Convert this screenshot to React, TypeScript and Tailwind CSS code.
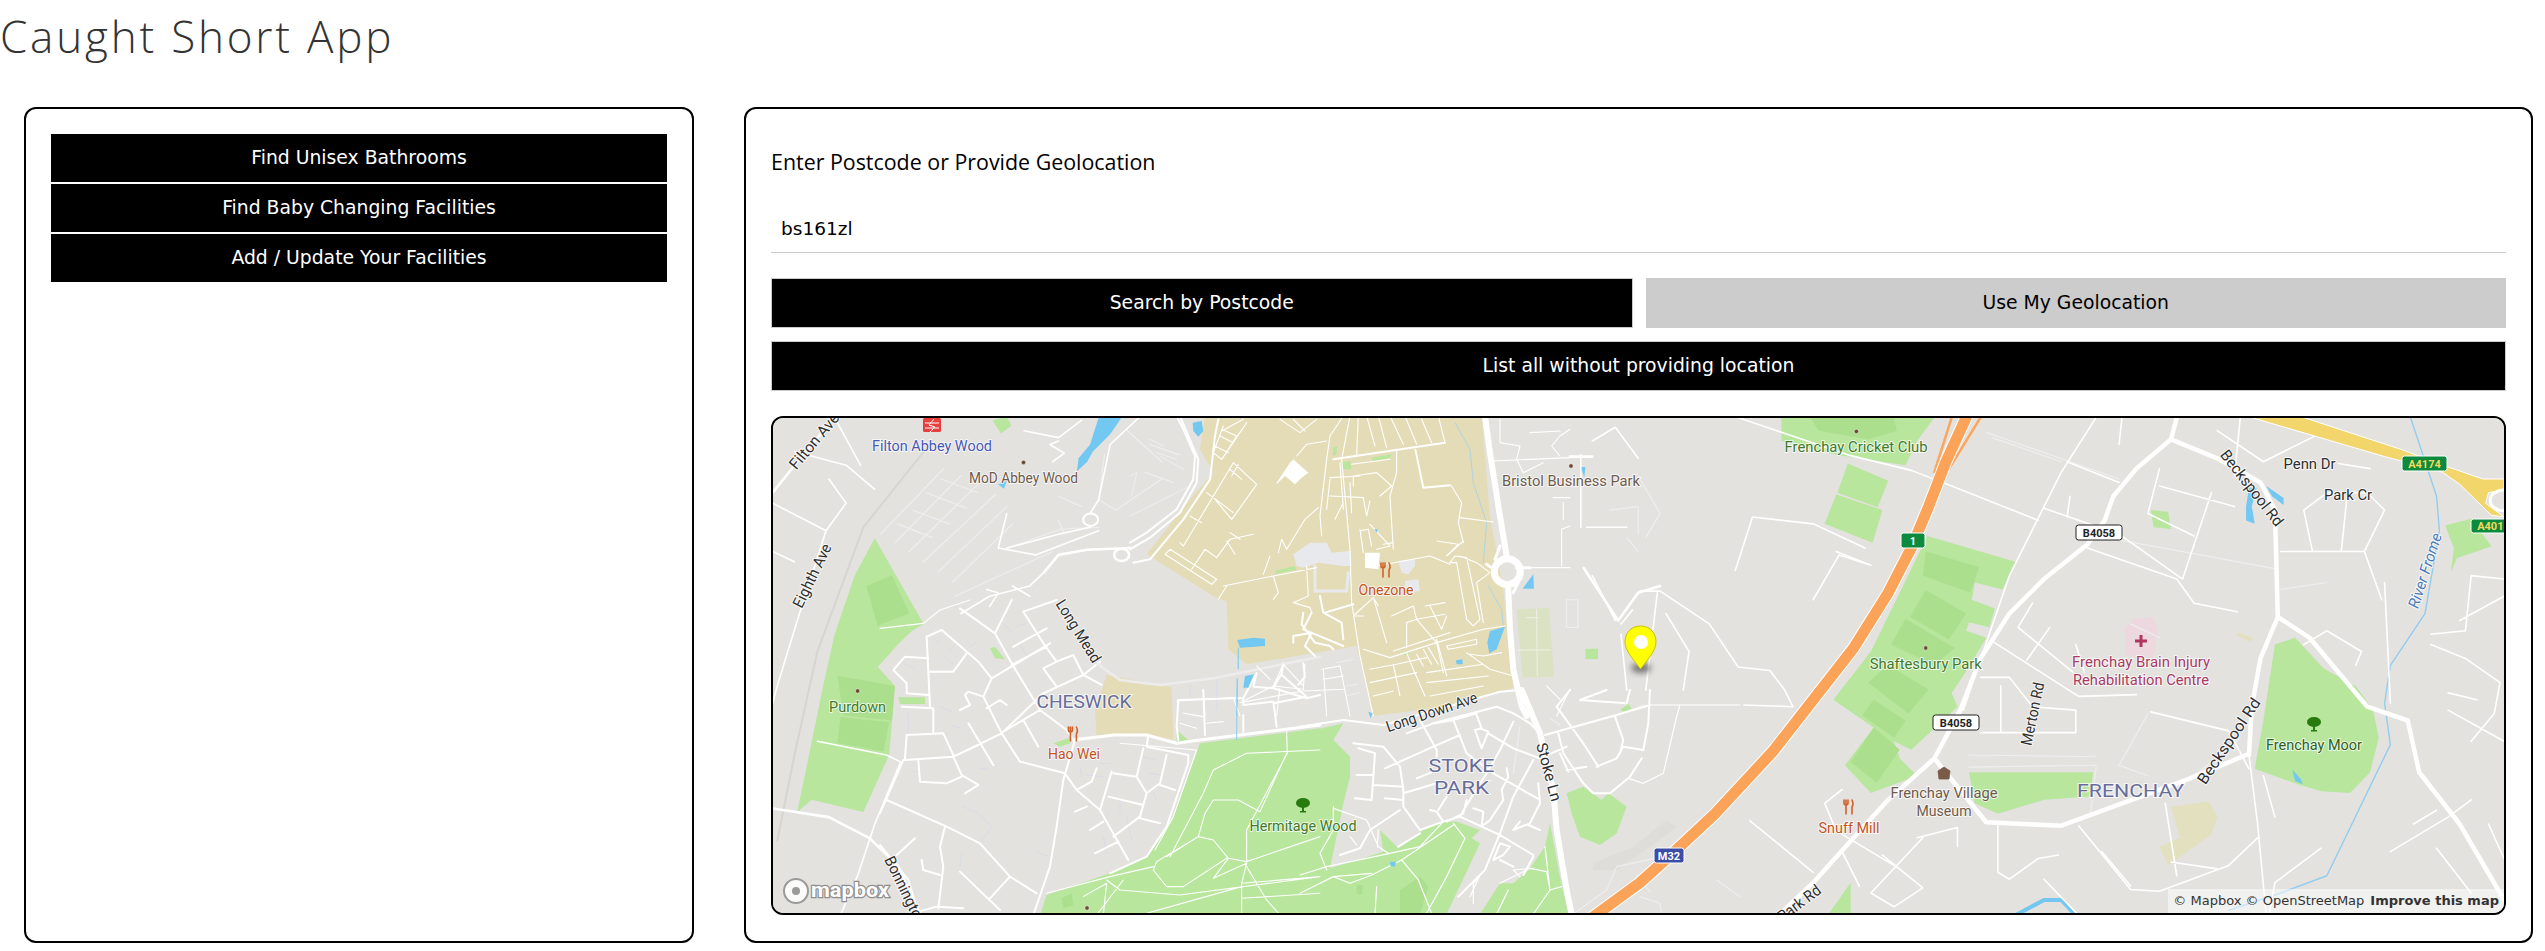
import React from 'react';

// Map paths are traced in crops of the reference, so each group has its own offset and scale
const WEST = 'translate(760 410) scale(0.574 0.345)';
const EAST = 'translate(1640 410) scale(0.5772 0.345)';
const CAMPUS = 'translate(1130 416) scale(0.3333)';
const CHESWICK = 'translate(880 600) scale(0.3333)';
const STOKE = 'translate(1300 690) scale(0.3333)';

const PARK = '#b7e69c';
const PARK_DARK = '#acdf8d';
const SAND = '#e4dcb7';
const WATER = '#72c8f1';
const PLAZA = '#e8e9ec';

const westParks = [
  'M200,372 L285,620 L265,640 L240,680 L205,745 L235,800 L230,900 L225,1000 L180,1165 L90,1130 L65,1165 L110,800 L130,650 L165,480 Z',
  'M405,30 L430,20 L438,45 L420,68 Z',
  'M1438,692 L1460,692 L1460,722 L1438,722 Z',
];
const westDark = [
  'M185,510 L230,480 L260,590 L205,625 Z',
  'M135,770 L235,800 L230,900 L145,885 Z',
  'M140,890 L225,905 L215,990 L135,965 Z',
];
const westWater = [
  'M590,22 L630,22 L610,70 L580,120 L570,150 L552,178 L555,140 L575,100 Z',
  'M1430,165 L1438,165 L1436,195 Z',
  'M415,215 L430,205 L425,228 Z',
];
const westThick =
  'M22,240 L70,140 L130,22 M495,470 L520,420 L570,405 L645,400 ' +
  'M22,1155 L120,1180 L190,1240 L240,1320 L280,1465 M1411,135 L1450,135 M1435,458 L1495,610 L1530,530 L1568,510';
const westThin =
  'M22,270 L115,350 M22,410 L60,440 M60,120 L150,160 L200,230 M130,22 L175,160 M120,200 L150,270 L115,350 L65,610 L30,800 L22,850 ' +
  'M245,1020 L200,1200 L170,1350 L140,1465 M100,960 L220,1000 L245,1020 ' +
  'M495,470 L470,510 L400,540 L350,590 M440,510 L470,540 M395,520 L415,530 L400,570 ' +
  'M660,22 L610,100 L590,260 L575,300 M575,340 L520,360 L430,400 M430,300 L415,400 L480,420 L590,350 ' +
  'M520,90 L505,100 L530,125 L510,150 M460,60 L520,80 L560,30 ' +
  'M1450,90 L1490,50 L1530,140 M1430,130 L1430,340 M1440,340 L1510,340 M1520,580 L1500,620 M1450,480 L1490,610 M1500,650 L1510,812';
const westFaint =
  'M210,360 L320,170 M235,385 L350,190 M260,410 L380,215 M285,440 L410,245 M310,470 L430,280 M335,500 L440,330 ' +
  'M240,330 L300,370 M265,290 L330,330 M290,240 L360,285 M315,200 L380,240 M340,540 L510,410 M430,400 L525,345 L590,340 ' +
  'M640,60 L700,150 M680,100 L730,130 M670,180 L720,210 M600,130 L590,260 L620,290 L700,200 M520,250 L560,280 M520,320 L530,360 ' +
  'M1480,290 L1530,280 L1530,360 M1510,370 L1530,410 M1405,550 L1425,550 L1425,630 L1405,630 Z';
const westRail = 'M300,90 L180,340 L100,700 L60,1000 L30,1250';

const campusFill = 'M225,0 L1055,0 L1080,300 L1120,520 L1140,700 L1150,815 L960,870 L730,900 L680,690 L350,745 L295,700 L290,555 L265,550 L50,415 L180,250 L250,170 L210,100 Z';
const campusGreen = [
  'M435,465 L495,450 L498,462 L435,473 Z',
  'M630,140 L660,135 L665,160 L640,160 Z',
  'M725,125 L785,115 L780,125 L730,135 Z',
  'M610,95 L622,90 L618,118 L608,118 Z',
  'M520,425 L545,415 L550,425 L525,432 Z',
  'M820,708 L838,706 L835,716 L822,716 Z',
];
const campusWater = [
  'M188,20 L215,15 L220,45 L205,62 L190,45 Z',
  'M322,672 L370,665 L405,668 L405,690 L330,695 Z',
  'M345,780 L372,775 L355,815 L340,815 Z',
  'M1080,645 L1125,632 L1100,700 L1078,712 L1072,680 Z',
  'M1178,518 L1210,475 L1212,518 Z',
  'M978,733 L998,730 L998,745 L980,745 Z',
  'M733,340 L743,340 L740,350 Z',
];
const campusThick = 'M1065,0 L1080,110 L1110,300 L1130,420 M1135,520 L1140,640 L1150,760 L1175,870 L1190,900';
const campusMedium =
  'M0,400 L60,365 L150,290 L200,200 L205,130 L175,60 L150,0 M10,440 L60,430 L160,310 L240,190 L255,60 L265,10 M0,380 L50,350 L140,280 L190,190 L195,120 L160,40 L140,0 ' +
  'M610,130 L945,80 M855,95 L880,215 L960,208 M570,540 L580,590 L635,620 L640,670 M585,590 L670,565 M520,590 L515,625 L555,680 L600,690 L610,700 ' +
  'M545,590 L520,640 L640,690 M490,680 L490,660 L545,650 L525,690 L555,720';
const campusThin =
  'M640,0 L600,60 L590,130 L570,300 L575,360 M660,0 L635,130 L660,400 L665,560 L690,720 L730,900 ' +
  'M680,120 L685,0 M735,90 L710,0 M770,95 L745,0 M820,85 L780,0 M860,85 L825,0 M905,80 L875,10 M945,80 L925,0 ' +
  'M800,100 L800,170 L780,240 L790,400 M665,145 L780,130 M670,210 L670,180 L740,170 L785,210 L750,240 ' +
  'M600,185 L690,180 M600,240 L700,245 L710,300 L720,255 M615,310 L640,260 M600,190 L590,280 M630,140 L640,280 M660,200 L665,290 ' +
  'M965,210 L995,260 L985,320 L1000,380 M990,305 L1090,318 M920,375 L985,385 L950,420 L1000,375 ' +
  'M960,440 L975,420 L1010,425 L1050,610 L1030,630 L1010,610 L980,440 Z M990,420 L1040,440 L1080,470 L1040,500 L1060,620 ' +
  'M740,450 L900,420 L960,445 M280,510 L430,480 L560,455 M265,550 L290,510 M430,480 L445,530 L430,550 M400,475 L420,420 M445,410 L455,370 L470,400 L525,310 L565,275 M500,120 L530,85 L590,75 ' +
  'M530,450 L535,540 L490,560 L540,575 L545,590 M670,600 L730,545 L770,680 M672,600 L700,600 M730,545 L745,570 ' +
  'M785,600 L850,570 L860,610 L830,620 L830,695 M860,610 L945,595 M885,570 L945,560 M900,570 L935,640 L950,600 M860,610 L920,680 L940,770 ' +
  'M700,700 L780,725 L920,680 L1060,640 L1125,630 M790,705 L960,650 M720,760 L800,745 L890,725 M720,800 L860,770 M730,840 L790,825 ' +
  'M890,800 L1075,780 M890,770 L1060,745 M950,690 L1040,670 L1040,685 L955,700 Z M1010,710 L1080,760 L1150,780 M900,840 L1060,810 M1020,715 L1060,720 L1115,710 ' +
  'M790,745 L810,840 M830,710 L850,760 L885,840 M860,715 L880,750 M880,700 L905,745 M895,695 L925,745 M920,670 L950,780 ' +
  'M690,345 L715,340 L725,390 M720,325 L780,390 L740,400 M690,340 L700,410 M790,380 L760,385 ' +
  'M150,380 L160,390 L310,140 L380,205 L320,290 L305,310 L255,250 M230,230 L310,290 M180,300 L215,320 M300,160 L335,190 M325,145 L305,180 ' +
  'M120,400 L260,490 L245,505 L105,415 Z M185,460 L225,400 L260,425 L300,370 L370,355 M290,375 L315,415 M300,350 L330,370 ' +
  'M280,30 L250,110 L275,130 L350,20 M270,60 L310,80 M340,10 L285,40 M255,90 L295,110 M275,40 L320,60 L295,100 M450,10 L510,50 L560,10 M490,10 L525,45 ' +
  'M1085,135 L1320,125 M1190,455 L1320,455 M1110,10 L1110,80 L1170,90 L1160,130 L1180,170 L1240,140 M1200,50 L1290,45 M1290,120 L1265,90 L1290,60 L1320,40 ' +
  'M1300,260 L1300,310 M1295,450 L1295,340 L1320,330 M1270,245 L1320,245 M1250,810 L1290,850 M1280,900 L1320,820 ' +
  'M380,750 L420,790 M460,745 L430,810 L520,820 L525,745 M460,745 L520,810 M330,860 L430,810 M140,855 L310,845 L330,900 M220,825 L225,900 ' +
  'M575,760 L630,750 L660,900 M580,790 L640,780 M580,760 L590,900 M450,810 L440,900 M330,860 L520,825 L640,820';
const campusFaint =
  'M60,70 L100,90 M80,110 L140,130 M90,120 L160,160 M0,180 L20,170 L5,240 M0,300 L170,215 M650,840 L690,830 M650,810 L680,805 M620,740 L670,730';

const cheswickParks = [
  'M960,430 L1320,385 L1320,945 L480,945 L500,885 L690,820 L800,770 L880,650 Z',
  'M330,145 L345,140 L375,178 L345,175 Z',
  'M520,430 L565,415 L570,430 L540,440 Z',
  'M55,292 L135,292 L135,312 L60,312 Z',
  'M890,390 L925,420 L890,425 Z',
];
const cheswickSand = 'M680,225 L875,262 L880,420 L790,405 L650,410 L645,330 Z';
const cheswickMedium =
  'M185,90 L295,185 L335,235 M335,235 L310,290 L365,400 L420,485 L555,520 L590,570 L660,630 L745,780 M335,235 L510,130 M395,195 L500,140 ' +
  'M140,110 L185,90 M140,110 L150,320 M40,210 L75,170 L145,175 M40,210 L80,250 L80,280 L145,285 M150,215 L220,215 L260,160 ' +
  'M345,100 L395,190 L480,330 L560,390 L580,420 M345,100 L395,0 M345,100 L240,25 M430,35 L490,130 L530,185 L490,205 L530,260 M530,185 L580,165 L610,225 L660,185 ' +
  'M430,35 L530,0 M400,140 L500,85 M610,225 L490,280 L365,400 L220,470 L75,480 M610,225 L665,255 M480,330 L370,395 ' +
  'M265,370 L340,495 M430,360 L475,440 M295,435 L220,470 L245,525 L295,555 L255,580 M245,530 L200,550 L120,545 L115,480 M80,405 L190,400 L220,465 M80,405 L75,475 ' +
  'M65,320 L160,325 L160,400 M240,330 L270,315 L255,285 L265,275 L310,290 M320,325 L360,300 L380,315 ' +
  'M585,420 L550,540 L530,680 L510,800 L460,945 M70,480 L0,640 M20,600 L200,680 L300,730 L390,830 L470,880 M195,680 L180,740 L190,800 L175,925 ' +
  'M125,780 L130,810 L180,825 M240,815 L360,930 M390,830 L330,895 M50,765 L105,715 M0,735 L85,840 L115,940 M115,935 L170,920 L250,925 ' +
  'M805,405 L800,440 L925,465 L925,490 L860,680 L800,770 L690,820 M790,445 L770,530 L800,580 L780,650 L700,710 M700,520 L770,530 M695,515 L660,630 ' +
  'M650,505 L635,545 L590,570 M860,465 L840,550 L800,580 M840,555 L885,570 M685,590 L790,615 M780,655 L840,670 M585,635 L620,620 M630,690 L670,665 M645,760 L715,725 ' +
  'M895,300 L1060,295 L1090,295 M895,300 L890,380 L895,420 M970,270 L975,405 M1130,220 L1090,295 L1090,315 L1180,305 L1190,380 M1130,220 L1120,260 L1180,265 L1205,220 L1210,190 ' +
  'M1205,225 L1280,290 L1180,310 M1180,265 L1280,295 L1320,285 M1270,190 L1275,230 L1255,255 M1090,345 L1090,395';
const cheswickThick = 'M580,420 L700,405 L800,405 L890,430 L960,420 M960,420 L1320,375';
const cheswickThin =
  'M130,70 L0,85 M130,70 L180,30 L270,0 M720,430 L950,450 L880,650 L825,750 ' +
  'M1220,395 L1222,460 L1100,690 L1100,790 L1085,850 L1085,945 M860,770 L955,710 L975,640 L1000,600 L1075,600 L1140,635 L1220,460 ' +
  'M1320,450 L1100,460 L1000,510 L970,580 L870,770 M955,710 L1000,720 L1045,775 L1100,785 L1320,710 M1045,775 L1000,835 L1100,790 ' +
  'M820,810 L860,860 L910,860 L1040,775 M820,810 L830,785 L955,710 M500,880 L690,830 L820,800 M680,840 L720,870 L900,885 L1320,830 ' +
  'M610,890 L680,850 L670,945 M730,840 L650,945 M1085,850 L1320,830 M1100,800 L1160,900 L1200,945 M800,940 L1085,860 M1085,895 L1320,880 ' +
  'M910,340 L970,350 M900,370 L950,385 M980,370 L1030,365';
const cheswickFaint =
  'M370,70 L400,100 M410,80 L440,70 M420,130 L440,170 M160,110 L175,130 M195,170 L215,190 M240,120 L210,150 M270,140 L290,125 M60,185 L100,205 M85,340 L85,400 ' +
  'M180,320 L215,335 M215,375 L240,385 M100,515 L115,515 M300,505 L320,505 M600,500 L605,530 M620,525 L670,530 M660,490 L690,490 M790,470 L825,480 M810,520 L840,525 ' +
  'M820,580 L830,600 M720,600 L720,635 M740,650 L755,720 M670,710 L680,760 M685,640 L680,660 M470,755 L505,770 M250,620 L295,640 L335,680 L305,725 M245,760 L240,800 ' +
  'M930,255 L930,295 M1010,245 L1010,330 M1160,215 L1180,230';

const stokeParks = [
  'M0,130 L130,100 L100,150 L150,200 L150,260 L130,340 L90,535 L250,485 L240,420 L295,475 L370,420 L430,395 L470,395 L540,420 L515,445 L540,460 L440,672 L0,672 Z',
  'M800,310 L850,290 L905,330 L925,310 L980,350 L950,430 L900,465 L840,440 L815,370 Z',
  'M960,60 L985,42 L995,55 L975,65 Z',
  'M540,672 L600,580 L640,580 L690,535 L735,470 L750,400 L780,560 L805,672 Z',
];
const stokeThick = 'M665,0 L720,130 L760,300 L770,420 L800,600 L815,672';
const stokeMedium =
  'M0,110 L130,90 L250,105 L600,5 L660,0 ' +
  'M160,160 L250,170 L300,230 L310,300 L310,350 L360,420 L430,395 L480,380 L600,435 L700,495 M175,175 L225,190 L215,330 L165,325 M170,255 L220,255 M220,285 L310,290 ' +
  'M255,325 L310,330 M310,310 L410,280 M350,265 L400,245 M255,235 L400,170 L480,135 M405,100 L460,90 L500,190 L580,250 L650,290 L720,330 ' +
  'M320,130 L400,100 L590,50 L640,70 L690,100 L720,130 M360,90 L410,180 L410,200 M460,90 L530,70 M530,75 L545,115 L525,120 L545,175 L565,125 L540,115 ' +
  'M565,130 L640,175 L720,205 M640,95 L600,180 L560,250 L500,345 L480,380 M620,235 L625,260 L605,300 L610,330 L570,390 L545,410 L550,365 L520,355 ' +
  'M700,210 L640,320 L600,430 L555,540 L475,620 M715,280 L720,340 L690,400 L640,420 M685,405 L720,420 M660,395 L640,420 M700,500 L670,555 M600,510 L640,530 ' +
  'M580,510 L600,460 L630,470 L610,495 Z M390,360 L410,365 L430,395 M440,320 L415,360 M500,330 L490,370 L440,395 M120,495 L180,475 L210,420 L300,360 M295,470 L360,430 ' +
  'M735,135 L950,75 L1050,45 M775,130 L790,190 L850,280 L880,310 L930,310 L990,260 L1025,205 M770,50 L810,0 M770,50 L850,160 L895,230 ' +
  'M890,230 L950,205 L970,170 L1030,180 L1045,100 L1050,0 M840,30 L920,0 M945,80 L970,150 L960,190 M720,205 L800,170 M800,240 L860,230 M780,190 L805,245 M990,0 L980,40 L840,30';
const stokeThin =
  'M235,420 L232,470 M150,440 L170,465 M430,395 L360,470 L270,490 L80,530 L0,555 M460,400 L495,445 L440,560 L380,670 M460,405 L305,510 L215,555 L150,580 L100,560 L0,610 ' +
  'M305,510 L355,570 L395,670 M230,590 L225,672 M215,550 L100,560 M80,540 L60,490 L100,420 L100,350 M100,355 L200,390 L235,470 L265,490 ' +
  'M600,580 L690,535 L740,545 L750,600 L700,672 M625,600 L590,672 M735,470 L750,600 L785,590 M700,535 L640,540 L660,560 M520,640 L520,580 L540,555 L510,620 ' +
  'M985,265 L1030,280 L1090,250 L1130,80 L1140,45 M1050,45 L1320,45';
const stokeFaint =
  'M660,110 L640,250 M820,672 L920,600 L950,530 L1090,500 L1320,280 M1250,570 L1320,620 M1020,620 L1080,640 L1085,672 M1010,555 L1050,605 M750,85 L780,105 M1030,45 L970,70';

const eastParks = [
  'M245,22 L510,22 L480,90 L460,160 L340,130 L245,90 Z',
  'M360,155 L430,205 L412,282 L342,240 Z',
  'M340,245 L420,290 L403,385 L320,330 Z',
  'M498,365 L650,440 L628,520 L580,500 L575,550 L615,575 L605,630 L570,615 L565,640 L600,660 L560,770 L540,820 L550,860 L470,985 L440,960 L450,1010 L480,1060 L400,1110 L355,1030 L405,920 L335,840 L400,700 L450,530 Z',
  'M570,1050 L785,1050 L780,1120 L700,1130 L620,1170 L580,1140 Z',
  'M1100,680 L1135,660 L1185,750 L1240,800 L1270,870 L1280,950 L1265,1050 L1230,1110 L1180,1105 L1140,1085 L1065,1040 L1080,900 Z',
  'M885,290 L915,295 L920,345 L890,340 Z',
  'M1395,335 L1440,315 L1475,395 L1415,430 L1405,470 L1410,400 Z',
  'M325,1465 L365,1370 L365,1465 Z',
];
const eastDark = [
  'M495,410 L588,455 L572,530 L490,480 Z',
  'M495,522 L565,590 L535,665 L468,600 Z',
  'M460,605 L545,690 L510,740 L435,680 Z',
  'M395,790 L430,740 L500,810 L465,880 Z',
  'M405,840 L460,900 L440,950 L385,885 Z',
  'M405,920 L450,985 L410,1080 L365,1020 Z',
  'M295,22 L440,22 L445,60 L395,85 L310,60 Z',
];
const eastWater = [
  'M1055,225 L1068,225 L1060,280 L1065,330 L1050,320 L1050,280 Z',
  'M1085,220 L1115,255 L1115,275 L1095,250 Z',
  'M1130,1042 L1145,1070 L1148,1085 L1135,1075 Z',
];
const eastThick =
  'M930,22 L920,85 L860,170 L820,250 L805,320 L775,390 L700,490 L640,590 L590,720 L555,870 L510,1010 L430,1130 L370,1240 L300,1370 L240,1465 ' +
  'M920,85 L1000,140 L1075,210 L1100,290 L1105,600 L1075,720 L1060,860 L1055,1000 M1105,600 L1160,660 L1210,760 L1260,860 L1330,900 L1350,1050 L1420,1200 L1497,1420 ' +
  'M510,1010 L600,1195 L730,1205 L950,1070 L1050,1000';
const eastThin =
  'M170,22 L360,130 L470,175 L540,220 L690,320 M700,285 L830,360 L940,490 M775,400 L930,490 M930,490 L960,560 L1035,585 M1055,1000 L1070,1200 L1085,1465 ' +
  'M790,22 L730,180 L640,480 L560,870 M835,22 L830,100 M1000,60 L1080,150 L1170,75 M740,150 L830,210 M900,170 L880,300 L960,365 M900,220 L1030,280 M990,240 L940,490 M1040,22 L1030,190 ' +
  'M1150,410 L1255,410 L1290,290 L1260,240 L1190,240 L1150,290 L1165,410 M1225,250 L1215,410 M1255,410 L1285,550 M1110,410 L1150,410 M1210,155 L1265,170 M745,250 L740,310 ' +
  'M610,670 L760,830 L860,825 M655,630 L750,760 M680,560 L655,630 M710,630 L670,725 M590,775 L640,775 L680,860 L755,870 L755,935 L590,935 M625,800 L625,935 M755,680 L770,760 ' +
  'M885,875 L1020,930 L1055,1040 M760,1205 L850,1390 L900,1395 L1020,1320 L1070,1240 M930,1350 L910,1140 M920,1310 L1000,1330 ' +
  'M480,1240 L550,1210 L550,1265 M490,1240 L400,1400 L440,1440 L490,1385 L420,1290 M620,1200 L620,1340 L640,1360 L690,1300 L725,1290 ' +
  'M1290,500 L1300,850 M1300,1280 L1400,1180 L1440,1130 M1380,1270 L1440,1400 M1470,1200 L1497,1300 M1340,1200 L1380,1160 ' +
  'M1150,680 L1190,640 L1250,700 L1240,740 M1370,650 L1430,640 L1440,480 L1497,490 M1370,680 L1430,720 L1490,790 L1480,880 L1440,960 M1400,870 L1497,960 M1420,610 L1497,540 M1400,820 L1450,840 ' +
  'M1180,1270 L1100,1370 L1090,1460 M700,1360 L760,1465 M1080,1060 L1100,1180 M800,1280 L850,1380 ' +
  'M0,525 L35,525 L120,620 L170,745 L225,755 L250,810 L265,860 L180,855 M300,330 L390,400 M195,310 L300,330 M195,310 L165,465 M340,410 L400,450 L345,420 L300,550 ' +
  'M30,530 L10,812 M45,590 L85,700 L75,812 M190,1190 L300,1340 M350,1280 L380,1380 M350,1100 L320,1140 L340,1220 L440,1320';
const eastFaint =
  'M570,1000 L790,1005 M570,1035 L790,1030 M790,1035 L780,1180 M850,620 L900,660 M600,65 L830,200 M775,360 L1100,460 M1110,520 L1190,500 M1040,950 L960,1060 M880,880 L830,1030 L880,1060 M610,80 L730,150 M0,200 L35,300 L10,370';

const MOTORWAY = 'M565,22 L530,150 L500,280 L470,400 L430,530 L370,690 L300,840 L230,990 L130,1170 L60,1280 L0,1370 L-90,1480';

function Fork({ x, y }: { x: number; y: number }) {
  return (
    <g transform={`translate(${x} ${y})`} stroke="#d2622a" fill="none" strokeWidth="1.6" strokeLinecap="round">
      <path d="M-3,-7 L-3,-3 M-5,-7 L-5,-4 Q-5,-2 -3,-2 Q-1,-2 -1,-4 L-1,-7 M-3,-2 L-3,7 M3,-7 Q5,-3 3,0 L3,7" />
    </g>
  );
}

function Tree({ x, y }: { x: number; y: number }) {
  return (
    <g transform={`translate(${x} ${y})`} fill="#277a0e">
      <ellipse cx="0" cy="-2" rx="7" ry="5" />
      <rect x="-1" y="0" width="2" height="7" />
      <rect x="-3" y="6" width="6" height="1.5" />
    </g>
  );
}

function Dot({ x, y }: { x: number; y: number }) {
  return <circle cx={x} cy={y} r="2.2" fill="#6b4a35" stroke="#ffffff" strokeOpacity="0.6" strokeWidth="0.8" />;
}

type LabelProps = {
  x: number;
  y: number;
  w: number;
  children: string;
  color?: string;
  angle?: number;
  size?: number;
  halo?: string;
  italic?: boolean;
  anchor?: 'middle' | 'start' | 'end';
};

// y is the centre of the word, as read off the crops
function Label({ x, y, w, children, color = '#2f2f2f', angle = 0, size = 15.5, halo = '#ffffff', italic, anchor = 'middle' }: LabelProps) {
  return (
    <text
      transform={`translate(${x} ${y}) rotate(${angle})`}
      y={size * 0.35}
      textAnchor={anchor}
      textLength={w}
      lengthAdjust="spacingAndGlyphs"
      fontSize={size}
      fill={color}
      fontStyle={italic ? 'italic' : 'normal'}
      stroke={halo}
      strokeOpacity="0.75"
      strokeWidth="2"
      paintOrder="stroke"
    >
      {children}
    </text>
  );
}

function Shield({ x, y, w, h, bg, border, color, text }: { x: number; y: number; w: number; h: number; bg: string; border: string; color: string; text: string }) {
  return (
    <g>
      <rect x={x} y={y} width={w} height={h} rx="2.5" fill={bg} stroke={border} strokeWidth="1" />
      <text x={x + w / 2} y={y + h / 2 + 4} textAnchor="middle" fontSize="11" fontWeight="700" fill={color}>
        {text}
      </text>
    </g>
  );
}

function Roads({ d, color = '#ffffff', width }: { d: string; color?: string; width: number }) {
  return <path d={d} fill="none" stroke={color} strokeWidth={width} strokeLinejoin="round" strokeLinecap="round" vectorEffect="non-scaling-stroke" />;
}

function Fills({ shapes, color }: { shapes: string[]; color: string }) {
  return (
    <>
      {shapes.map((d) => (
        <path key={d} d={d} fill={color} />
      ))}
    </>
  );
}

function MapDrawing() {
  return (
    <svg viewBox="773 418 1731 495" className="block h-full w-full" fontFamily="Roboto, sans-serif">
      <defs>
        <filter id="pin-shadow" x="-50%" y="-50%" width="200%" height="200%">
          <feGaussianBlur stdDeviation="3" />
        </filter>
      </defs>
      <rect x="773" y="418" width="1731" height="495" fill="#e3e2df" />

      {/* land */}
      <g transform={CAMPUS}>
        <path d={campusFill} fill={SAND} />
        <path d="M1160,580 L1258,575 L1272,782 L1178,785 Z" fill="#dbe2c3" />
        <Fills shapes={campusGreen} color={PARK} />
      </g>
      <g transform={CHESWICK}>
        <path d={cheswickSand} fill={SAND} />
        <Fills shapes={cheswickParks} color={PARK} />
        <path d="M545,895 L575,880 L580,915 L550,925 Z" fill={PARK_DARK} />
      </g>
      <g transform={STOKE}>
        <path d="M880,520 L1000,470 L1100,390 L1130,410 L1050,470 L950,540 L880,540 Z" fill="#dedddA" />
        <Fills shapes={stokeParks} color={PARK} />
        <path d="M300,600 L360,560 L385,590 L360,672 L300,672 Z M170,585 L190,585 L185,615 L170,610 Z" fill={PARK_DARK} />
      </g>
      <g transform={WEST}>
        <Fills shapes={westParks} color={PARK} />
        <Fills shapes={westDark} color={PARK_DARK} />
        <Fills shapes={westWater} color={WATER} />
      </g>
      <g transform={EAST}>
        <path d="M920,1150 L985,1135 L1000,1180 L990,1230 L915,1320 L900,1265 L935,1240 Z M1035,645 L1062,660 L1058,672 L1035,655 Z" fill="#e2e0bf" />
        <path d="M840,630 L855,605 L890,600 L897,640 L890,720 L840,710 Z" fill="#edd8df" />
        <Fills shapes={eastParks} color={PARK} />
        <Fills shapes={eastDark} color={PARK_DARK} />
        <Fills shapes={eastWater} color={WATER} />
      </g>

      {/* roads */}
      <g transform={WEST}>
        <Roads d={westRail} color="#d6d5d1" width={2} />
        <Roads d={westFaint} color="#eeeef0" width={1.2} />
        <Roads d={westThin} width={1.6} />
        <Roads d={westThick} width={2.6} />
        <ellipse cx="630" cy="420" rx="13" ry="18" fill="none" stroke="#ffffff" strokeWidth="2.5" vectorEffect="non-scaling-stroke" />
        <ellipse cx="576" cy="318" rx="13" ry="18" fill="none" stroke="#ffffff" strokeWidth="2" vectorEffect="non-scaling-stroke" />
      </g>
      <g transform={CHESWICK}>
        <Roads d={cheswickFaint} color="#d9dbe8" width={1} />
        <Roads d={cheswickThin} width={1.1} />
        <Roads d={cheswickMedium} width={2} />
        <Roads d={cheswickThick} width={3} />
        <Roads d="M650,190 L720,240 L840,255 L1000,235 L1320,170" color="#ececec" width={2.5} />
        <path d="M1075,150 L1075,205 M1072,235 L1070,420" fill="none" stroke="#8ccdec" strokeWidth="1" vectorEffect="non-scaling-stroke" />
      </g>
      <g transform={CAMPUS}>
        <path d="M490,415 L540,380 L590,380 L605,410 L660,405 L665,450 L640,450 L565,440 L520,455 L500,450 Z M805,435 L855,430 L855,450 L835,475 L815,470 Z M825,495 L865,490 L870,525 L825,530 Z" fill={PLAZA} />
        <Roads d="M555,450 L555,525 L650,525 L655,470" color={PLAZA} width={3} />
        <Roads d={campusFaint} color="#eeeef0" width={1} />
        <Roads d="M975,20 L1020,100 L1030,200 L1070,320 L1060,440 M1075,510 L1115,580 L1120,630" color="#9fd2ea" width={0.8} />
        <Roads d={campusThin} width={1.1} />
        <Roads d={campusMedium} width={2} />
        <Roads d={campusThick} width={6} />
        <path d="M440,200 L480,140 L490,130 L535,170 L515,185 L495,205 L465,180 L440,205 Z M705,410 L750,410 L745,460 L705,455 Z" fill="#ffffff" />
        <circle cx="1132" cy="467" r="39" fill="none" stroke="#ffffff" strokeWidth="7" vectorEffect="non-scaling-stroke" />
        <Roads d="M1160,455 L1200,455 M1085,455 L1070,445 M1095,430 L1110,390 M1165,500 L1150,530" width={3} />
        <Fills shapes={campusWater} color={WATER} />
        <path d="M325,695 L325,760 M322,790 L320,900" fill="none" stroke="#8ccdec" strokeWidth="1" vectorEffect="non-scaling-stroke" />
        <Roads d="M1220,580 L1222,780 M1165,702 L1262,702 M1190,605 L1225,605" color="#f0f0e4" width={1} />
      </g>
      <g transform={STOKE}>
        <Roads d={stokeFaint} color="#eeeef0" width={1.1} />
        <Roads d={stokeThin} width={1.2} />
        <Roads d={stokeMedium} width={2} />
        <Roads d={stokeThick} width={6} />
        <path d="M205,65 L218,70 L212,85 Z M270,515 L288,515 L285,530 L272,528 Z" fill={WATER} />
      </g>
      <g transform={EAST}>
        <Roads d="M1335,22 L1380,250 L1385,350 L1360,590 L1300,740 L1290,850 L1300,970 L1190,1350 L1110,1400 L1020,1450" color="#91cdf0" width={1.4} />
        <Roads d="M650,1465 L700,1420 L730,1420 L755,1465" color={WATER} width={4} />
        <Roads d={eastFaint} color="#eeeef0" width={1.2} />
        <Roads d={eastThin} width={1.6} />
        <Roads d={eastThick} width={4.5} />
        <path
          d="M1060,22 L1150,22 L1320,115 L1400,165 L1460,200 L1497,200 L1497,230 L1470,240 L1465,270 L1497,310 L1475,305 L1420,215 L1390,180 L1290,135 Z"
          fill="#f2d56b"
          stroke="#ffffff"
          strokeWidth="1"
          vectorEffect="non-scaling-stroke"
        />
        <ellipse cx="1497" cy="262" rx="24" ry="30" fill="none" stroke="#ffffff" strokeWidth="3" vectorEffect="non-scaling-stroke" />
        <Roads d="M540,22 L510,180 M590,22 L528,190" color="#fca55c" width={2.5} />
        <Roads d={MOTORWAY} width={13} />
        <Roads d={MOTORWAY} color="#fca35a" width={11} />
      </g>

      <rect x="923" y="418" width="18" height="14" rx="1.5" fill="#e8403e" />
      <path d="M925,423 L939,423 M925,428 L939,428 M934,419 L929,425 L935,427 L930,432" stroke="#ffffff" strokeWidth="1" fill="none" />

      <Dot x={1023.5} y={462.5} />
      <Dot x={1571} y={466} />
      <Dot x={857.6} y={691} />
      <Dot x={1856.4} y={431.4} />
      <Dot x={1925.7} y={648} />
      <Dot x={1087} y={908} />
      <Fork x={1386} y={570} />
      <Fork x={1073.4} y={734} />
      <Fork x={1849} y={807} />
      <Tree x={1303} y={805} />
      <Tree x={2314} y={724} />
      <path d="M2141,635 L2141,647 M2135,641 L2147,641" stroke="#b0355f" strokeWidth="3" />
      <path d="M1944,767 L1950,771 L1949,779 L1939,779 L1938,771 Z M1941,773 L1941,778 M1944,773 L1944,778 M1947,773 L1947,778" fill="#7a5a48" stroke="#7a5a48" strokeWidth="0.8" />

      <Label x={814} y={441} w={68} angle={-50}>Filton Ave</Label>
      <Label x={812} y={575.6} w={69} angle={-64}>Eighth Ave</Label>
      <Label x={932} y={445.5} w={120} color="#4658b4">Filton Abbey Wood</Label>
      <Label x={1023.5} y={478} w={109} color="#6f5b4b">MoD Abbey Wood</Label>
      <Label x={1571} y={481} w={138} color="#6f5b4b">Bristol Business Park</Label>
      <Label x={857.6} y={706.8} w={57} color="#3f7a2a">Purdown</Label>
      <Label x={1078.6} y={631} w={71} angle={58}>Long Mead</Label>
      <Label x={1084} y={701.6} w={95} size={18} color="#676d99">CHESWICK</Label>
      <Label x={1386} y={590} w={55} color="#c4541f">Onezone</Label>
      <Label x={1074} y={754} w={52} color="#c4541f">Hao Wei</Label>
      <Label x={1431.6} y={712} w={95} angle={-18.6}>Long Down Ave</Label>
      <Label x={1461.5} y={766} w={66} size={18} color="#676d99">STOKE</Label>
      <Label x={1461.5} y={788} w={55} size={18} color="#676d99">PARK</Label>
      <Label x={1549} y={772} w={60} angle={75}>Stoke Ln</Label>
      <Label x={1303} y={826} w={107} color="#3f7a2a">Hermitage Wood</Label>
      <Label x={889} y={857} w={75} angle={64} anchor="start">Bonnington</Label>

      <Label x={1856} y={447} w={143} color="#3f7a2a">Frenchay Cricket Club</Label>
      <Label x={2309.5} y={463.5} w={52}>Penn Dr</Label>
      <Label x={2348} y={494.5} w={48}>Park Cr</Label>
      <Label x={2252} y={488} w={92} angle={52}>Beckspool Rd</Label>
      <Label x={2228.7} y={741} w={100} angle={-56}>Beckspool Rd</Label>
      <Label x={2425} y={570.5} w={78} angle={-72} color="#4a7cb8" italic>River Frome</Label>
      <Label x={1925.7} y={663.6} w={112} color="#3f7a2a">Shaftesbury Park</Label>
      <Label x={2141} y={662} w={138} color="#a93a62">Frenchay Brain Injury</Label>
      <Label x={2141} y={680} w={136} color="#a93a62">Rehabilitation Centre</Label>
      <Label x={2032.5} y={713.7} w={64} angle={-78}>Merton Rd</Label>
      <Label x={2314} y={745} w={96} color="#2f5f22">Frenchay Moor</Label>
      <Label x={2130.6} y={791} w={107} size={18} color="#676d99">FRENCHAY</Label>
      <Label x={1944} y={793} w={107} color="#6f5b4b">Frenchay Village</Label>
      <Label x={1944} y={811} w={55} color="#6f5b4b">Museum</Label>
      <Label x={1849} y={828} w={61} color="#c4541f">Snuff Mill</Label>
      <Label x={1819} y={888} w={50} angle={-37} anchor="end">Park Rd</Label>

      <Shield x={2402} y={456} w={45} h={15} bg="#0c8a3e" border="#ffffff" color="#f5d95a" text="A4174" />
      <Shield x={2471} y={519} w={45} h={14} bg="#0c8a3e" border="#ffffff" color="#f5d95a" text="A4018" />
      <Shield x={1901} y={533} w={24} h={15} bg="#0c8a3e" border="#ffffff" color="#ffffff" text="1" />
      <Shield x={2076} y={525} w={46} h={15} bg="#ffffff" border="#222222" color="#222222" text="B4058" />
      <Shield x={1933} y={715} w={46} h={15} bg="#ffffff" border="#222222" color="#222222" text="B4058" />
      <Shield x={1654} y={848} w={30} h={15} bg="#3c4da8" border="#ffffff" color="#ffffff" text="M32" />

      <ellipse cx="1641" cy="668" rx="10" ry="5" fill="#555555" opacity="0.8" filter="url(#pin-shadow)" />
      <path
        d="M1640.5,626 C1630,626 1625,634 1625,642 C1625,651 1634,660 1640.5,669 C1647,660 1656,651 1656,642 C1656,634 1651,626 1640.5,626 Z"
        fill="#ffff00"
        stroke="#c9c400"
        strokeWidth="1"
      />
      <circle cx="1641" cy="642" r="7" fill="#ffffff" />

      <circle cx="796" cy="891" r="12" fill="#ffffff" fillOpacity="0.85" stroke="#9a9a9a" strokeWidth="2" />
      <circle cx="796" cy="891" r="4" fill="#9a9a9a" />
      <text x="811" y="897" fontSize="21" fontWeight="700" fill="#ffffff" stroke="#8f8f8f" strokeWidth="2.5" paintOrder="stroke" textLength="78" lengthAdjust="spacingAndGlyphs">
        mapbox
      </text>
    </svg>
  );
}

const blackButton = 'block h-[50px] w-full border border-[#ccc] bg-black text-center text-[#fff]';

export default function App() {
  return (
    <div className="min-h-[951px] bg-white pb-2 font-['DejaVu_Sans',sans-serif] text-[18.8px] text-black">
      <h1 className="h-[107px] pt-[11px] font-['Open_Sans',sans-serif] text-[44px] leading-[50px] font-light tracking-[2.8px] text-[#333]">
        Caught Short App
      </h1>
      <div className="flex gap-[50px] pr-3 pl-6">
        <div className="w-[670px] shrink-0 rounded-xl border-2 border-black px-[25px] pt-[25px]">
          <div className="flex flex-col gap-[2px]">
            <button className="h-[48px] bg-black text-center text-white">Find Unisex Bathrooms</button>
            <button className="h-[48px] bg-black text-center text-white">Find Baby Changing Facilities</button>
            <button className="h-[48px] bg-black text-center text-white">Add / Update Your Facilities</button>
          </div>
        </div>
        <div className="flex-1 rounded-xl border-2 border-black px-[25px] pt-[25px] pb-[26px]">
          <p className="mb-[14px] flex h-[56px] items-center font-['Open_Sans',sans-serif] text-[21.4px]">Enter Postcode or Provide Geolocation</p>
          <input
            readOnly
            value="bs161zl"
            className="mb-[25px] block h-[49px] w-full border-b border-[#ccc] px-[10px] text-[18.5px] outline-none"
          />
          <div className="mb-[13px] flex gap-[13px]">
            <button className={blackButton}>Search by Postcode</button>
            <button className="block h-[50px] w-full bg-[#ccc] text-center text-black">Use My Geolocation</button>
          </div>
          <button className={`${blackButton} mb-[25px]`}>List all without providing location</button>
          <div className="relative h-[499px] overflow-hidden rounded-xl border-2 border-black">
            <MapDrawing />
            <div className="absolute right-0 bottom-0 flex h-[24px] items-center gap-[6px] bg-white/50 px-[5px] text-[13px] text-[#333]">
              <span>© Mapbox © OpenStreetMap</span>
              <span className="font-bold">Improve this map</span>
            </div>
          </div>
        </div>
      </div>
    </div>
  );
}
